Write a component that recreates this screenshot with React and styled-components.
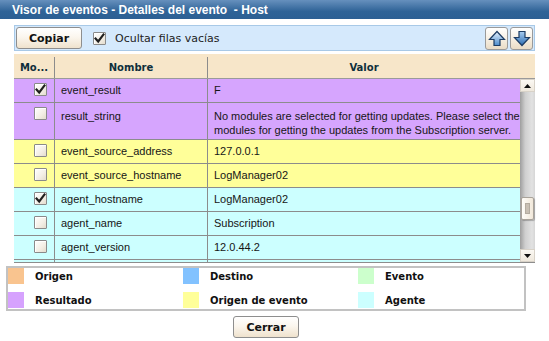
import React from 'react';
import styled, { createGlobalStyle } from 'styled-components';

const GlobalStyle = createGlobalStyle`
  html, body {
    margin: 0;
    padding: 0;
    background: #ffffff;
  }
  * {
    box-sizing: border-box;
  }
`;

const ROW_COLORS = {
  result: '#d6a5fe',
  source: '#ffff99',
  agent: '#ccffff',
};

// the last agent row is scrolled out of view, only its top edge shows
const rows = [
  { group: 'result', checked: true, name: 'event_result', value: 'F' },
  {
    group: 'result',
    checked: false,
    wrap: true,
    name: 'result_string',
    value: 'No modules are selected for getting updates. Please select the modules for getting the updates from the Subscription server.',
  },
  { group: 'source', checked: false, name: 'event_source_address', value: '127.0.0.1' },
  { group: 'source', checked: false, name: 'event_source_hostname', value: 'LogManager02' },
  { group: 'agent', checked: true, name: 'agent_hostname', value: 'LogManager02' },
  { group: 'agent', checked: false, name: 'agent_name', value: 'Subscription' },
  { group: 'agent', checked: false, name: 'agent_version', value: '12.0.44.2' },
  { group: 'agent', checked: false, name: '', value: '', hidden: true },
];

const legend = [
  { label: 'Origen', color: '#f9c48f' },
  { label: 'Destino', color: '#82c2ff' },
  { label: 'Evento', color: '#ccffcc' },
  { label: 'Resultado', color: '#d6a2fe' },
  { label: 'Origen de evento', color: '#ffff99' },
  { label: 'Agente', color: '#ccffff' },
];

const Window = styled.div`
  width: 549px;
  height: 341px;
  display: flex;
  flex-direction: column;
  overflow: hidden;
`;

const TitleBar = styled.div`
  height: 19px;
  padding-left: 12px;
  display: flex;
  align-items: center;
  background: linear-gradient(#6690bd, #2f6397 60%, #2c5f93);
  color: #ffffff;
  font: bold 12px "Liberation Sans", Arial, sans-serif;
  white-space: pre;
`;

const Content = styled.div`
  margin: 6px 14px 0 14px;
  display: flex;
  flex-direction: column;
  gap: 3px;
`;

const Toolbar = styled.div`
  height: 26px;
  padding: 1px;
  display: flex;
  align-items: center;
  background: #d5e9fc;
  border: 1px solid #a8c9e7;
`;

const Button = styled.button`
  width: 66px;
  height: 22px;
  margin: 0;
  padding: 0;
  border: 1px solid #8e8e8e;
  border-radius: 3px;
  background: linear-gradient(#ffffff, #fbf6ee 45%, #efe2cd);
  color: #111111;
  font: bold 11px "DejaVu Sans", Verdana, sans-serif;
  cursor: pointer;
`;

const CheckLabel = styled.label`
  margin-left: 11px;
  display: flex;
  align-items: center;
  gap: 9px;
  color: #222222;
  font: 11px "DejaVu Sans", Verdana, sans-serif;
`;

const Box = styled.span`
  width: 13px;
  height: 13px;
  flex: none;
  display: flex;
  align-items: center;
  justify-content: center;
  border: 1px solid #8a8a8a;
  border-radius: 1px;
  background: linear-gradient(135deg, #ffffff, #f3eee5 60%, #e4dccd);
  box-shadow: inset 1px 1px 0 #ffffff;
`;

const Spacer = styled.div`
  flex: 1;
`;

const ArrowButton = styled.button`
  width: 23px;
  height: 23px;
  margin: 0 0 0 2px;
  padding: 0;
  display: flex;
  align-items: center;
  justify-content: center;
  border: 1px solid #9a9a9a;
  border-radius: 3px;
  background: linear-gradient(#ffffff, #f7f0e4 50%, #eadcc6);
`;

const Grid = styled.div`
  display: flex;
  flex-direction: column;
  border-bottom: 1px solid #8c8c8c;
`;

const HeaderRow = styled.div`
  height: 25px;
  display: grid;
  grid-template-columns: 40px 153px 1fr 15px;
  background: #f7e6c9;
  border-bottom: 1px solid #9a9a9a;
`;

const HeaderCell = styled.div`
  display: flex;
  align-items: center;
  justify-content: center;
  color: #0e2f3c;
  font: bold 10px "DejaVu Sans", Verdana, sans-serif;
  border-left: ${(p) => (p.$divider ? '1px solid #8c8c8c' : 'none')};
  margin: 3px 0 0 0;
`;

const BodyWrap = styled.div`
  height: 183px;
  display: flex;
`;

const Body = styled.div`
  flex: 1;
  overflow: hidden;
`;

const Row = styled.div`
  display: grid;
  grid-template-columns: 40px 153px 1fr;
  min-height: 24px;
  background: ${(p) => ROW_COLORS[p.$group]};
  border-bottom: 1px solid #8c8c8c;
`;

const CheckCell = styled.div`
  display: flex;
  justify-content: flex-end;
  padding: 4px 7px 0 0;
`;

const Cell = styled.div`
  padding: ${(p) => (p.$wrap ? '6px 0 2px 6px' : '4px 0 0 6px')};
  border-left: 1px solid #8c8c8c;
  color: #161616;
  font: 11px/14px "Liberation Sans", Arial, sans-serif;
`;

const ScrollBar = styled.div`
  width: 15px;
  display: flex;
  flex-direction: column;
  background: linear-gradient(to right, #9e9e9e, #cfcfcf 35%, #e2e2e2 80%, #d6d6d6);
`;

const ScrollArrow = styled.div`
  height: 13px;
  display: flex;
  align-items: center;
  justify-content: center;
  background: linear-gradient(#fbf8f3, #efe8dc);
  border: 1px solid #d8d2c8;
`;

const Track = styled.div`
  flex: 1;
  display: flex;
  flex-direction: column;
  padding-top: ${(p) => p.$offset}px;
`;

const Thumb = styled.div`
  height: 23px;
  margin: 0 1px 0 1px;
  display: flex;
  align-items: center;
  justify-content: center;
  background: linear-gradient(to right, #fffdf9, #f1e8da);
  border: 1px solid #a9a39a;
  border-radius: 2px;
  box-shadow: 1px 1px 1px rgba(0, 0, 0, 0.25);
`;

const Grip = styled.div`
  width: 5px;
  height: 11px;
  background: #c9c0b4;
  border: 1px solid #b4aca0;
`;

const Legend = styled.div`
  width: 520px;
  margin: 3px 0 0 6px;
  padding: 0 0 1px 0;
  display: grid;
  grid-template-columns: 175px 175px 1fr;
  row-gap: 8px;
  border: 2px solid #c2c2c2;
`;

const LegendItem = styled.div`
  display: flex;
  align-items: center;
  gap: 11px;
  color: #111111;
  font: bold 10px "DejaVu Sans", Verdana, sans-serif;
`;

const Swatch = styled.span`
  width: 16px;
  height: 16px;
  flex: none;
  background: ${(p) => p.$color};
`;

const Footer = styled.div`
  width: 520px;
  margin: 5px 0 0 6px;
  display: flex;
  justify-content: center;
`;

function CheckMark() {
  return (
    <svg width="11" height="11" viewBox="0 0 11 11">
      <path d="M1.5 5.5 L4.2 8.5 L9.5 1.5" fill="none" stroke="#1f1f1f" strokeWidth="2.1" strokeLinecap="square" />
    </svg>
  );
}

function Check({ checked }) {
  return <Box>{checked ? <CheckMark /> : null}</Box>;
}

function BigArrow({ down }) {
  const id = down ? 'gdown' : 'gup';
  return (
    <svg width="18" height="17" viewBox="0 0 18 17">
      <defs>
        <linearGradient id={id} x1="0" y1="0" x2="0" y2="1">
          <stop offset="0" stopColor={down ? '#a9cdf0' : '#e9f4fe'} />
          <stop offset="1" stopColor={down ? '#2b6cb2' : '#4b8bcc'} />
        </linearGradient>
      </defs>
      <path
        d={down ? 'M6 1.5 H12 V7.5 H16.5 L9 15.5 L1.5 7.5 H6 Z' : 'M9 1.5 L16.5 9.5 H12 V15.5 H6 V9.5 H1.5 Z'}
        fill={`url(#${id})`}
        stroke="#1d3c63"
        strokeWidth="1.2"
        strokeLinejoin="miter"
      />
    </svg>
  );
}

function SmallTriangle({ down }) {
  return (
    <svg width="7" height="4" viewBox="0 0 7 4">
      <path d={down ? 'M0 0 H7 L3.5 4 Z' : 'M3.5 0 L7 4 H0 Z'} fill="#111111" />
    </svg>
  );
}

export default function App() {
  return (
    <>
      <GlobalStyle />
      <Window>
        <TitleBar>Visor de eventos - Detalles del evento  - Host</TitleBar>
        <Content>
          <Toolbar>
            <Button>Copiar</Button>
            <CheckLabel>
              <Check checked />
              Ocultar filas vacías
            </CheckLabel>
            <Spacer />
            <ArrowButton><BigArrow /></ArrowButton>
            <ArrowButton><BigArrow down /></ArrowButton>
          </Toolbar>
          <Grid>
            <HeaderRow>
              <HeaderCell>Mo...</HeaderCell>
              <HeaderCell $divider>Nombre</HeaderCell>
              <HeaderCell $divider>Valor</HeaderCell>
              <HeaderCell />
            </HeaderRow>
            <BodyWrap>
              <Body>
                {rows.map((row, i) => (
                  <Row key={i} $group={row.group}>
                    <CheckCell>{row.hidden ? null : <Check checked={row.checked} />}</CheckCell>
                    <Cell $wrap={row.wrap}>{row.name}</Cell>
                    <Cell $wrap={row.wrap}>{row.value}</Cell>
                  </Row>
                ))}
              </Body>
              <ScrollBar>
                <ScrollArrow><SmallTriangle /></ScrollArrow>
                <Track $offset={105}>
                  <Thumb><Grip /></Thumb>
                </Track>
                <ScrollArrow><SmallTriangle down /></ScrollArrow>
              </ScrollBar>
            </BodyWrap>
          </Grid>
        </Content>
        <Legend>
          {legend.map((item) => (
            <LegendItem key={item.label}>
              <Swatch $color={item.color} />
              {item.label}
            </LegendItem>
          ))}
        </Legend>
        <Footer>
          <Button>Cerrar</Button>
        </Footer>
      </Window>
    </>
  );
}
